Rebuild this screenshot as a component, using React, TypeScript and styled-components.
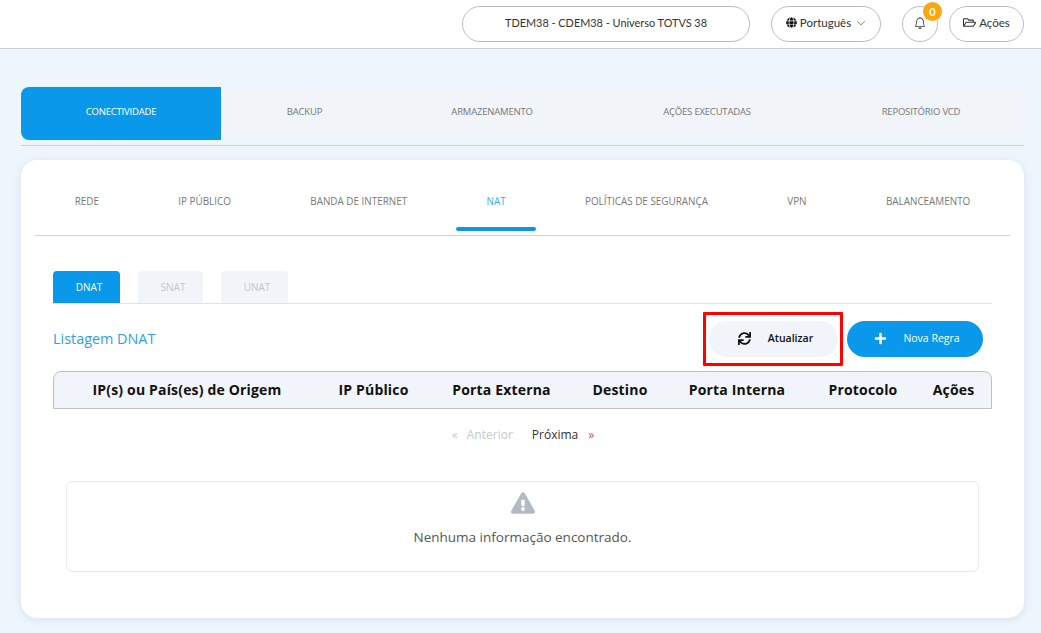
import styled, { createGlobalStyle } from "styled-components"
import { BsBell, BsChevronDown } from "react-icons/bs"
import { FaExclamationTriangle, FaGlobe, FaPlus, FaRegFolderOpen, FaSync } from "react-icons/fa"

const GlobalStyle = createGlobalStyle`
html, body {
    margin: 0;
    padding: 0;
    height: 633px;
    overflow: hidden;
    background: #eef6fd;
    font-family: "Open Sans", "Liberation Sans", sans-serif;
}
* {
    box-sizing: border-box;
}
`

const mainTabs = ["CONECTIVIDADE", "BACKUP", "ARMAZENAMENTO", "AÇÕES EXECUTADAS", "REPOSITÓRIO VCD"]
const subTabs = ["REDE", "IP PÚBLICO", "BANDA DE INTERNET", "NAT", "POLÍTICAS DE SEGURANÇA", "VPN", "BALANCEAMENTO"]
const natTabs = ["DNAT", "SNAT", "UNAT"]
const columns = ["IP(s) ou País(es) de Origem", "IP Público", "Porta Externa", "Destino", "Porta Interna", "Protocolo", "Ações"]

const App = () => {
    return (
        <>
            <GlobalStyle />
            <Header>
                <Pill w={288} mr={21} fs={10.9}>TDEM38 - CDEM38 - Universo TOTVS 38</Pill>
                <Pill w={110} mr={21}>
                    <FaGlobe size={11} color="#111" />
                    Português
                    <Chevron size={10} />
                </Pill>
                <Pill w={36} mr={11}>
                    <BsBell size={12} />
                    <Badge>0</Badge>
                </Pill>
                <Pill w={75} mr={0}>
                    <FaRegFolderOpen size={13} />
                    Ações
                </Pill>
            </Header>
            <Main>
                <MainTabs>
                    {mainTabs.map((t, i) => (
                        <MainTab key={t} active={i === 0}>{t}</MainTab>
                    ))}
                </MainTabs>
                <Card>
                    <SubTabs>
                        {subTabs.map((t) => (
                            <SubTab key={t} active={t === "NAT"}>{t}</SubTab>
                        ))}
                    </SubTabs>
                    <Content>
                        <NatTabs>
                            {natTabs.map((t, i) => (
                                <NatTab key={t} active={i === 0} w={i === 1 ? 65 : 67}>{t}</NatTab>
                            ))}
                        </NatTabs>
                        <TitleRow>
                            <Title>Listagem DNAT</Title>
                            <Actions>
                                <RefreshButton>
                                    <FaSync size={13} color="#111" />
                                    Atualizar
                                    <Highlight />
                                </RefreshButton>
                                <NewButton>
                                    <FaPlus size={13} />
                                    Nova Regra
                                </NewButton>
                            </Actions>
                        </TitleRow>
                        <TableHead>
                            {columns.map((c) => (
                                <span key={c}>{c}</span>
                            ))}
                        </TableHead>
                        <Pager>
                            <PageLink off>«</PageLink>
                            <PageLink off>Anterior</PageLink>
                            <PageLink next>Próxima</PageLink>
                            <PageLink arrow>»</PageLink>
                        </Pager>
                        <Empty>
                            <FaExclamationTriangle size={24} color="#b4bac3" />
                            <EmptyText>Nenhuma informação encontrado.</EmptyText>
                        </Empty>
                    </Content>
                </Card>
            </Main>
        </>
    )
}
export default App

const Header = styled.header`
height: 49px;
background: #fff;
border-bottom: 1px solid #c6ccd8;
display: flex;
justify-content: flex-end;
padding: 6px 17px 0 0;
`
const Pill = styled.div<{ w: number; mr: number; fs?: number }>`
position: relative;
width: ${({ w }) => w}px;
height: 36px;
margin-right: ${({ mr }) => mr}px;
border: 1px solid #b9bec6;
border-radius: 18px;
padding-bottom: 3px;
display: flex;
align-items: center;
justify-content: center;
gap: 3px;
font-family: "Lato", "Open Sans", sans-serif;
font-size: ${({ fs }) => fs ?? 11.5}px;
color: #333;
`
const Chevron = styled(BsChevronDown)`
margin-left: 2px;
color: #7a4a20;
`
const Badge = styled.span`
position: absolute;
top: -5px;
right: -5px;
width: 19px;
height: 19px;
border-radius: 50%;
background: #f9a70f;
color: #fff;
font-size: 11px;
font-weight: 700;
display: flex;
align-items: center;
justify-content: center;
`
const Main = styled.main`
padding: 38px 17px 0 21px;
`
const MainTabs = styled.nav`
height: 59px;
border-bottom: 1px solid #c9d0dc;
padding-bottom: 5px;
display: grid;
grid-template-columns: 200px 167px 208px 222px 206px;
`
const MainTab = styled.div<{ active: boolean }>`
padding-bottom: 5px;
display: flex;
align-items: center;
justify-content: center;
font-size: 9.5px;
letter-spacing: -0.2px;
color: ${({ active }) => (active ? "#fff" : "#777")};
background: ${({ active }) => (active ? "#0a99ea" : "#f1f4f8")};
border-radius: ${({ active }) => (active ? "8px 0 0 8px" : "0")};
`
const Card = styled.section`
margin-top: 14px;
height: 458px;
background: #fff;
border-radius: 16px;
box-shadow: 0 2px 10px rgba(120, 140, 170, 0.18);
padding: 0 14px;
`
const SubTabs = styled.nav`
height: 76px;
border-bottom: 1px solid #cfd4dc;
display: flex;
justify-content: space-around;
align-items: flex-start;
padding-top: 34px;
`
const SubTab = styled.div<{ active: boolean }>`
position: relative;
font-size: 9.9px;
line-height: 14px;
color: ${({ active }) => (active ? "#3aa9ee" : "#777")};

&::after {
    content: "";
    display: ${({ active }) => (active ? "block" : "none")};
    position: absolute;
    top: 33px;
    left: 50%;
    margin-left: -40px;
    width: 80px;
    height: 4px;
    border-radius: 2px;
    background: #0a99ea;
}
`
const Content = styled.div`
padding: 35px 18px 0;
`
const NatTabs = styled.div`
height: 33px;
border-bottom: 1px solid #dfe2e7;
display: flex;
gap: 18px;
`
const NatTab = styled.div<{ active: boolean; w: number }>`
width: ${({ w }) => w}px;
height: 32px;
padding-left: 5px;
border-radius: 4px 4px 0 0;
display: flex;
align-items: center;
justify-content: center;
font-size: 10px;
font-weight: 500;
color: ${({ active }) => (active ? "#fff" : "#c3c7cd")};
background: ${({ active }) => (active ? "#0a99ea" : "#f1f4f8")};
`
const TitleRow = styled.div`
height: 67px;
padding: 17px 9px 14px 0;
display: flex;
justify-content: space-between;
align-items: center;
`
const Title = styled.h2`
margin: 0;
padding-bottom: 1px;
font-size: 14.4px;
font-weight: 400;
color: #2f9fe8;
`
const Actions = styled.div`
display: flex;
gap: 9px;
`
const RefreshButton = styled.div`
position: relative;
width: 129px;
height: 36px;
border-radius: 18px;
background: #f1f4f8;
color: #111;
font-size: 10.5px;
font-weight: 600;
padding: 0 0 2px 4px;
display: flex;
align-items: center;
justify-content: center;
gap: 17px;
`
const Highlight = styled.span`
position: absolute;
top: -9px;
left: -6px;
right: -5px;
bottom: -9px;
border: 3px solid #f00;
border-radius: 1px;
pointer-events: none;
`
const NewButton = styled.div`
width: 136px;
height: 36px;
border-radius: 18px;
background: #0a99ea;
color: #fff;
font-size: 10.5px;
font-weight: 500;
padding: 0 0 2px 4px;
display: flex;
align-items: center;
justify-content: center;
gap: 16px;
`
const TableHead = styled.div`
height: 38px;
background: #f1f4f8;
border: 1px solid #bcc0c7;
border-radius: 8px 8px 0 0;
padding-bottom: 1px;
display: grid;
grid-template-columns: 266px 107px 149px 88px 146px 106px 75px;
align-items: center;
text-align: center;
font-size: 14px;
font-weight: 700;
color: #111;
letter-spacing: 0.17px;
`
const Pager = styled.div`
height: 72px;
padding: 17px 8px 0 0;
display: flex;
justify-content: center;
align-items: flex-start;
font-size: 12px;
line-height: 18px;
`
const PageLink = styled.span<{ off?: boolean; next?: boolean; arrow?: boolean }>`
color: ${({ off, arrow }) => (off ? "#c5c8cc" : arrow ? "#b5651d" : "#333")};
margin-left: ${({ off, next, arrow }) => (next ? "19px" : arrow ? "10px" : off ? "9px" : "0")};
`
const Empty = styled.div`
height: 91px;
margin: 0 13px;
border: 1px solid #e9ebee;
border-radius: 6px;
display: flex;
flex-direction: column;
align-items: center;
padding-top: 9px;
`
const EmptyText = styled.p`
margin: 13px 0 0;
font-size: 13.5px;
color: #555;
`
